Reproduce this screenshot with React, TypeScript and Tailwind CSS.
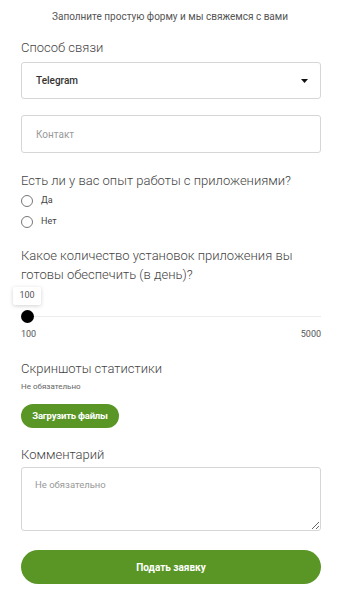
import React from "react";

const font = { fontFamily: "Roboto, 'Noto Sans', sans-serif" };

const Radio = ({ label }: { label: string }) => (
  <label className="flex items-center h-[14px] gap-[8px]">
    <span className="w-[12px] h-[12px] rounded-full border border-[#777] bg-white" />
    <span className="text-[9px] text-[#444]">{label}</span>
  </label>
);

export default function App() {
  return (
    <div className="min-h-screen bg-white pl-[21px] pr-[19px] pt-[11px] text-[#3a3a3a]" style={font}>
      <p className="text-center text-[10px] leading-[12px] text-[#555] -ml-[2px]">
        Заполните простую форму и мы свяжемся с вами
      </p>

      <p className="mt-[17px] text-[13px] leading-[16px] font-light text-[#444]">Способ связи</p>
      <div className="mt-[6px] h-[37px] rounded-[3px] border border-[#d6d6d6] flex items-center justify-between pl-[14px] pr-[12px]">
        <span className="text-[10px] font-medium text-[#333]">Telegram</span>
        <svg width="7" height="4" viewBox="0 0 7 4">
          <path d="M0 0h7L3.5 4z" fill="#111" />
        </svg>
      </div>

      <input
        placeholder="Контакт"
        className="mt-[16px] block w-full h-[38px] rounded-[3px] border border-[#d6d6d6] px-[14px] text-[10px] placeholder:text-[#999] outline-none"
      />

      <p className="mt-[20px] text-[13px] leading-[16px] font-light text-[#444]">
        Есть ли у вас опыт работы с приложениями?
      </p>
      <div className="mt-[5px] flex flex-col gap-[7px]">
        <Radio label="Да" />
        <Radio label="Нет" />
      </div>

      <p className="mt-[17px] text-[13px] leading-[19px] font-light text-[#444]">
        Какое количество установок приложения вы готовы обеспечить (в день)?
      </p>

      <div className="mt-[3px]">
        <div className="-ml-[8px] w-[28px] h-[18px] bg-white shadow-[0_1px_4px_rgba(0,0,0,0.18)] rounded-[2px] flex items-center justify-center text-[9px] text-[#555]">
          100
        </div>
        <div className="mt-[5px] h-[12px] flex items-center">
          <span className="w-[13px] h-[13px] rounded-full bg-black shrink-0" />
          <span className="flex-1 h-px bg-[#ececec]" />
        </div>
        <div className="mt-[7px] flex justify-between text-[9px] leading-[11px] text-[#555]">
          <span>100</span>
          <span>5000</span>
        </div>
      </div>

      <p className="mt-[21px] text-[13px] leading-[16px] font-light text-[#444]">Скриншоты статистики</p>
      <p className="mt-[5px] text-[8px] leading-[10px] text-[#666]">Не обязательно</p>
      <button className="mt-[12px] h-[24px] w-[98px] rounded-full bg-[#5a9626] text-white text-[9.5px] font-bold tracking-[-0.2px]">
        Загрузить файлы
      </button>

      <p className="mt-[19px] text-[13px] leading-[16px] font-light text-[#444]">Комментарий</p>
      <textarea
        placeholder="Не обязательно"
        className="mt-[4px] block w-full h-[64px] rounded-[3px] border border-[#d6d6d6] px-[13px] pt-[10px] text-[9.5px] placeholder:text-[#999] outline-none"
      />

      <button className="mt-[19px] w-full h-[34px] rounded-full bg-[#5a9626] text-white text-[10px] font-bold">
        Подать заявку
      </button>
    </div>
  );
}
